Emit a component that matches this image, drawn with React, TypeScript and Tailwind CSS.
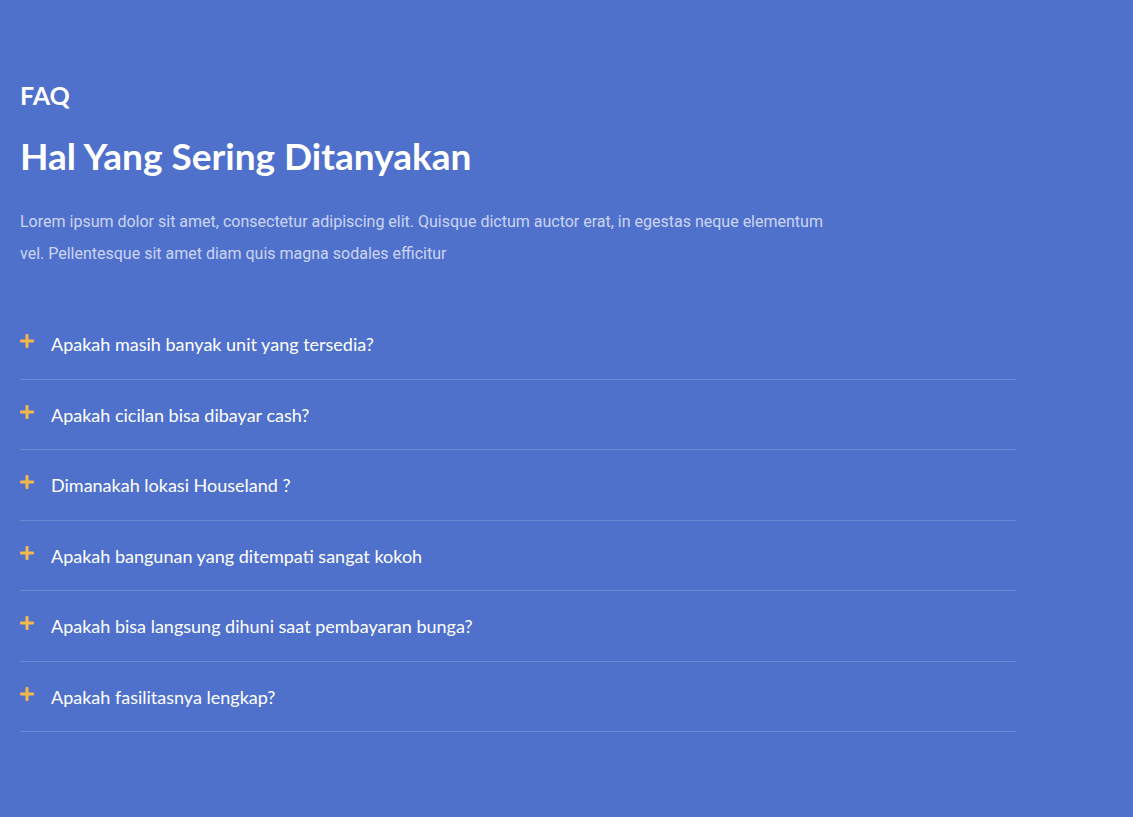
import React from "react";

const questions = [
  "Apakah masih banyak unit yang tersedia?",
  "Apakah cicilan bisa dibayar cash?",
  "Dimanakah lokasi Houseland ?",
  "Apakah bangunan yang ditempati sangat kokoh",
  "Apakah bisa langsung dihuni saat pembayaran bunga?",
  "Apakah fasilitasnya lengkap?",
];

function Plus() {
  return (
    <svg width="14" height="14" viewBox="0 0 14 14" className="shrink-0">
      <rect x="5.5" y="0" width="3" height="14" rx="1" fill="#f7b84b" />
      <rect x="0" y="5.5" width="14" height="3" rx="1" fill="#f7b84b" />
    </svg>
  );
}

export default function App() {
  return (
    <div className="min-h-[817px] w-full bg-[#4f71cb] px-5 pt-[79px] pb-[80px]" style={{ fontFamily: "Lato, sans-serif" }}>
      <div className="w-[996px]">
        <h3 className="text-[25px] font-bold leading-[32px] text-white">FAQ</h3>
        <h2 className="mt-[23px] text-[37px] font-bold leading-[44px] text-white">Hal Yang Sering Ditanyakan</h2>
        <p
          className="mt-[28px] max-w-[820px] text-[16px] leading-[32px] text-[#ccd5f3]"
          style={{ fontFamily: "Roboto, sans-serif" }}
        >
          Lorem ipsum dolor sit amet, consectetur adipiscing elit. Quisque dictum auctor erat, in egestas neque elementum vel. Pellentesque sit amet diam quis magna sodales efficitur
        </p>
        <div className="mt-[39px]">
          {questions.map((q) => (
            <div key={q} className="flex h-[70.5px] items-center gap-[17px] border-b border-[#6d89d6] pt-[1px]">
              <div className="-mt-[6px]">
                <Plus />
              </div>
              <span className="text-[18px] leading-[24px] text-white">{q}</span>
            </div>
          ))}
        </div>
      </div>
    </div>
  );
}
